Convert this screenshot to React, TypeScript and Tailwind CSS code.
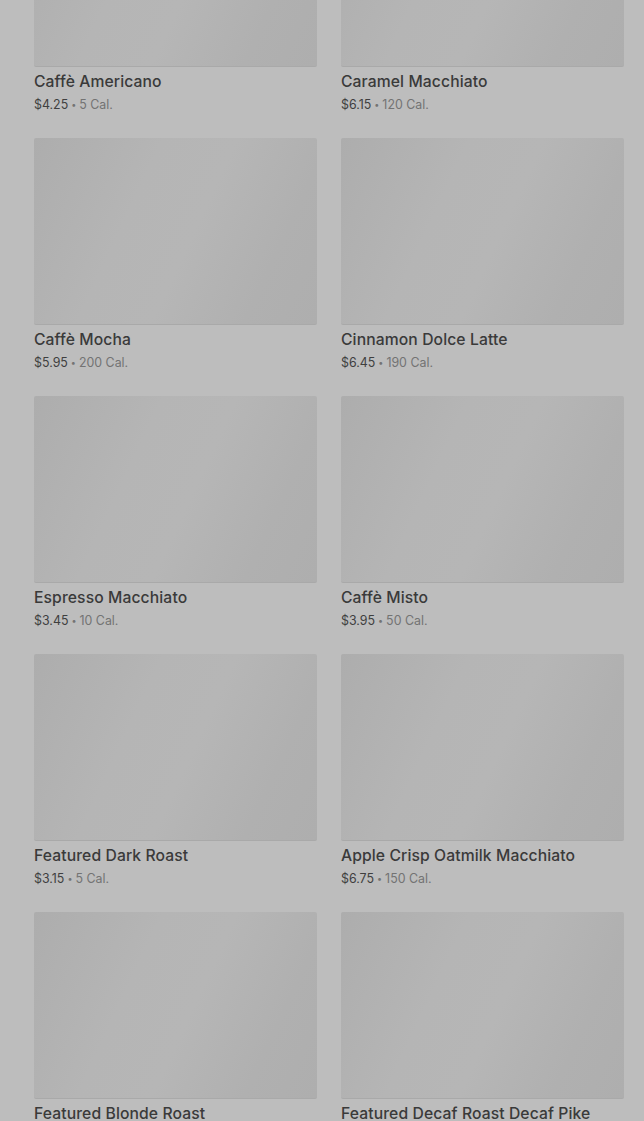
const items = [
  { name: "Caffè Americano", price: "$4.25", cal: "5 Cal." },
  { name: "Caramel Macchiato", price: "$6.15", cal: "120 Cal." },
  { name: "Caffè Mocha", price: "$5.95", cal: "200 Cal." },
  { name: "Cinnamon Dolce Latte", price: "$6.45", cal: "190 Cal." },
  { name: "Espresso Macchiato", price: "$3.45", cal: "10 Cal." },
  { name: "Caffè Misto", price: "$3.95", cal: "50 Cal." },
  { name: "Featured Dark Roast", price: "$3.15", cal: "5 Cal." },
  { name: "Apple Crisp Oatmilk Macchiato", price: "$6.75", cal: "150 Cal." },
  { name: "Featured Blonde Roast", price: "$3.15", cal: "5 Cal." },
  { name: "Featured Decaf Roast Decaf Pike", price: "$3.15", cal: "5 Cal." },
];

export default function App() {
  return (
    <div
      className="w-full h-[1121px] overflow-hidden bg-[#bdbdbd]"
      style={{ fontFamily: "Inter, 'Noto Sans', sans-serif" }}
    >
      <div className="-mt-[120px] pl-[34px] pr-[20px] grid grid-cols-2 gap-x-6 gap-y-[23px]">
        {items.map((item) => (
          <ProductCard key={item.name} {...item} />
        ))}
      </div>
    </div>
  );
}

function ProductCard({ name, price, cal }: { name: string; price: string; cal: string }) {
  return (
    <div className="flex flex-col">
      <div className="h-[187px] w-full rounded-[2px] border-b border-[#a9a9a9] bg-[linear-gradient(115deg,#adadad_0%,#b5b5b5_35%,#b6b6b6_55%,#b0b0b0_80%,#aeaeae_100%)]"></div>
      <h3 className="mt-[5px] text-[15.7px] leading-5 font-medium text-[#3a3a3a] tracking-[0.1px] whitespace-nowrap">
        {name}
      </h3>
      <p className="mt-[3px] text-[12.4px] leading-5 text-[#3f3f3f]">
        {price}
        <span className="text-[#737373]">
          <span className="mx-[3px] text-[9px] align-[1px]">•</span>
          {cal}
        </span>
      </p>
    </div>
  );
}
